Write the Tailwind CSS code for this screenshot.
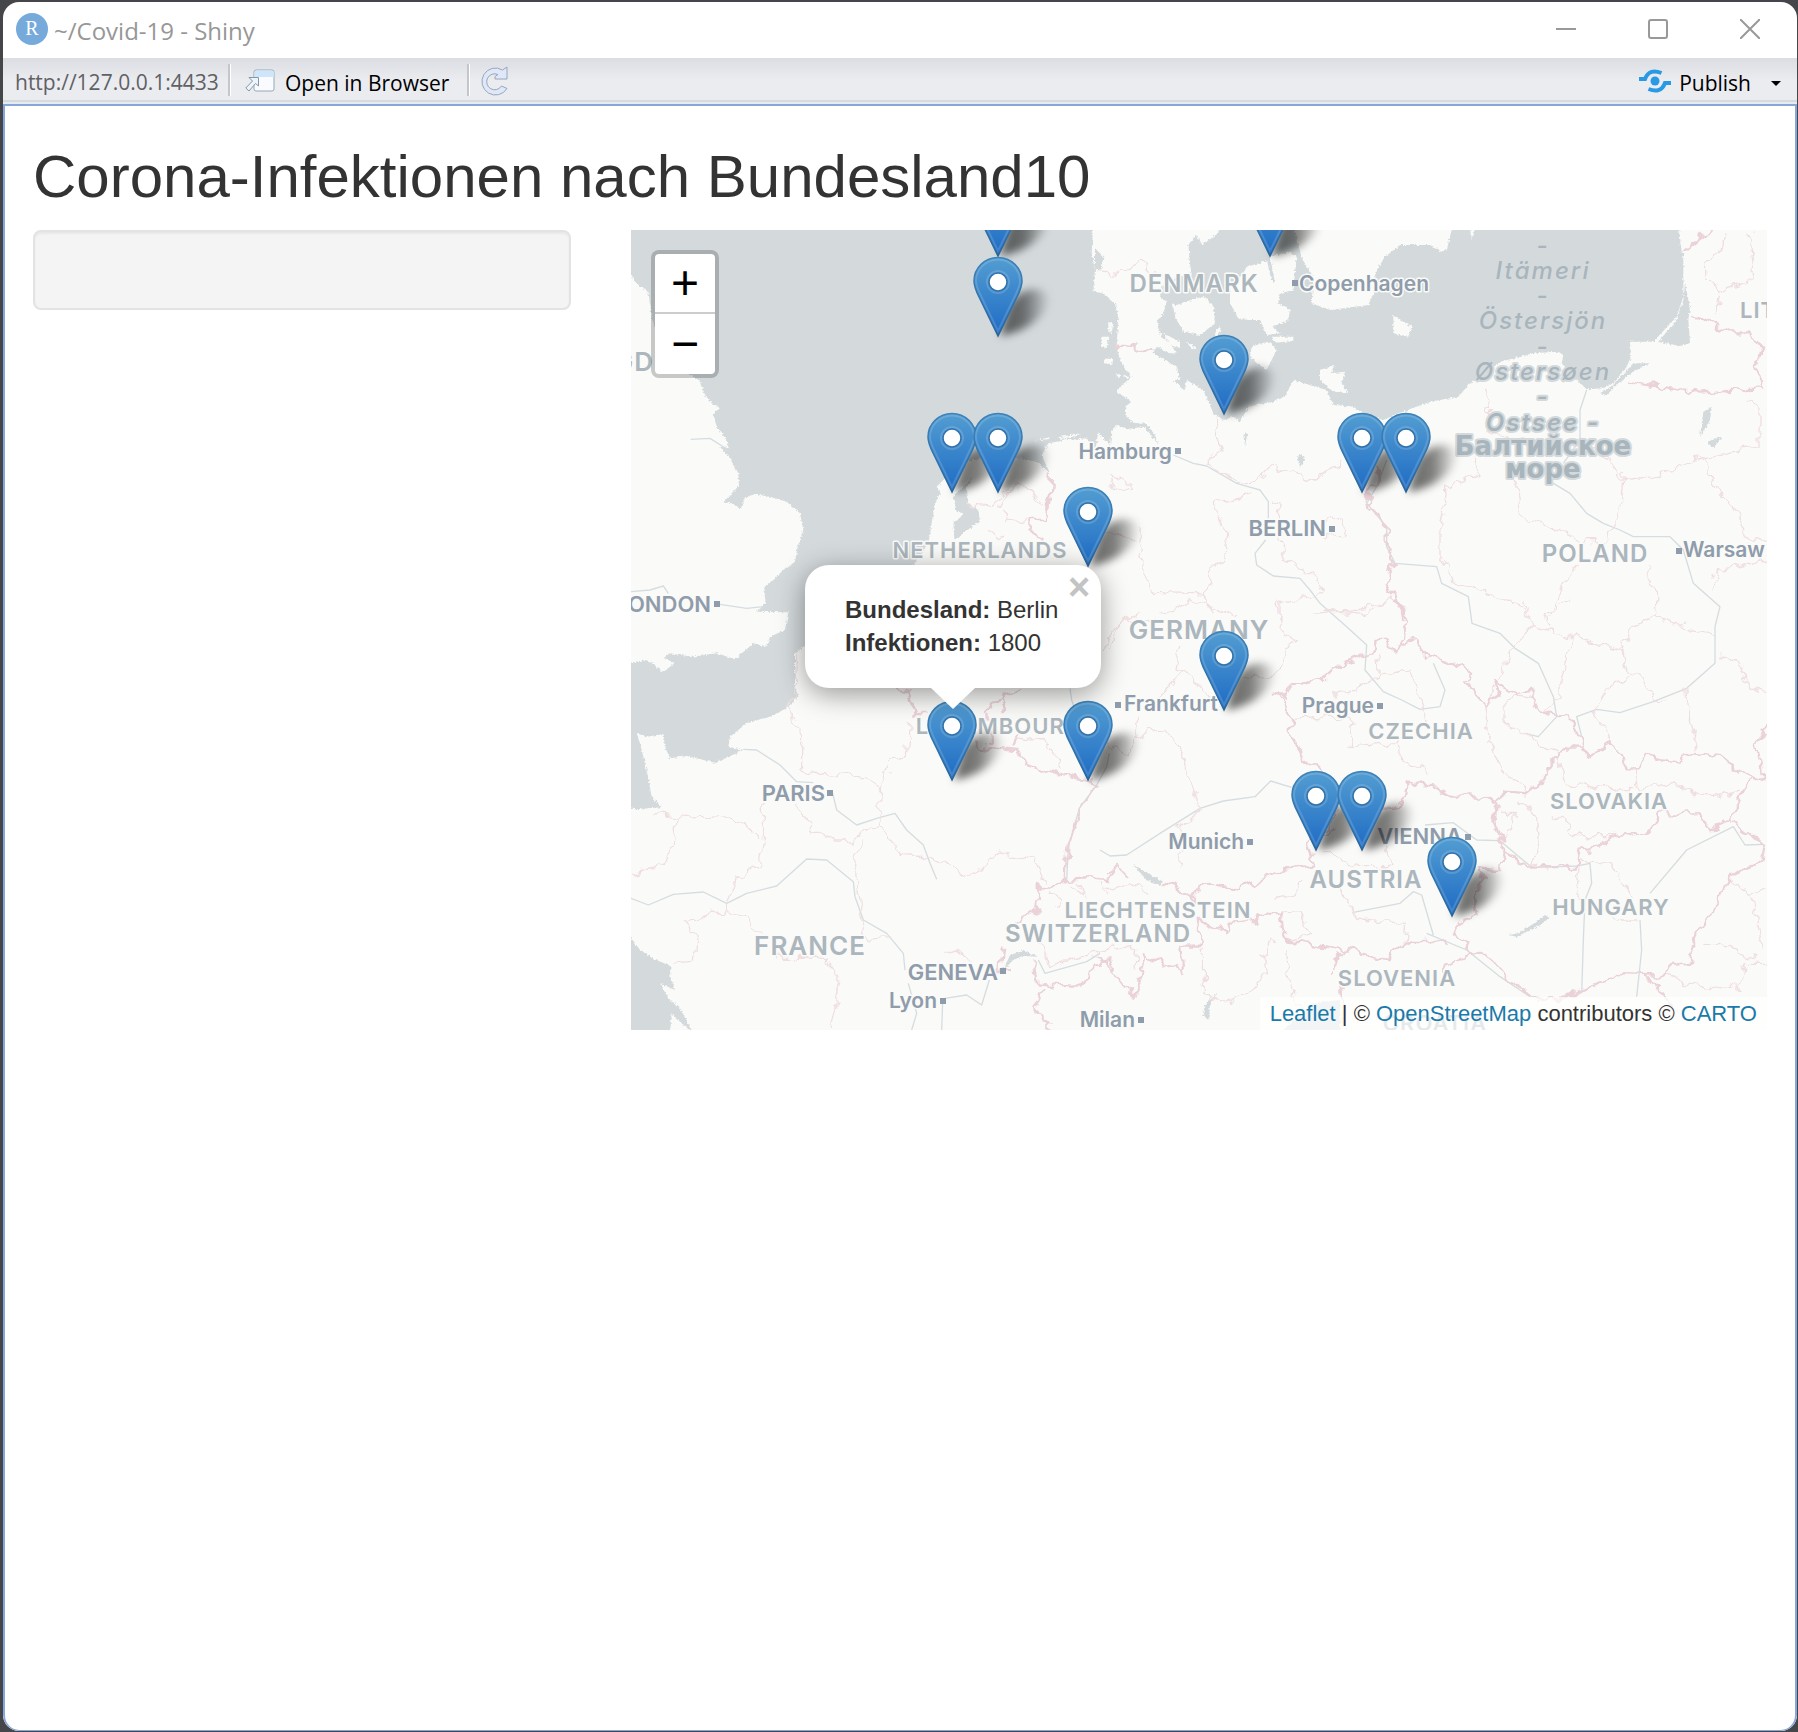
<!DOCTYPE html>
<html lang="de">
<head>
<meta charset="utf-8">
<meta name="viewport" content="width=device-width, initial-scale=1">
<title>~/Covid-19 - Shiny</title>
<script src="https://cdn.jsdelivr.net/npm/@tailwindcss/browser@4"></script>
</head>
<body class="bg-[#44464a]">
<div class="flex min-h-screen flex-col pt-[2px] pr-px pb-px pl-[3px]">
<div class="flex flex-1 flex-col overflow-hidden rounded-2xl bg-white">

  <header class="flex h-14 shrink-0 items-center pr-px pb-0.5 pl-[13px] font-['Open_Sans',sans-serif]">
    <svg class="h-8 w-8" viewBox="0 0 32 32" aria-hidden="true"><circle cx="16" cy="16" r="16" fill="#75aadb"/><text x="16" y="22" text-anchor="middle" font-family="Liberation Serif, serif" font-size="20" fill="#fff">R</text></svg>
    <h1 class="ml-1.5 pt-1 text-[24px] leading-8 whitespace-nowrap text-[#979797]">~/Covid-19 - Shiny</h1>
    <div class="ml-auto flex items-center">
      <button type="button" aria-label="Minimize" class="flex h-14 w-[92px] items-center justify-center"><svg class="h-5 w-5" viewBox="0 0 20 20"><path d="M0 10H20" stroke="#999" stroke-width="2"/></svg></button>
      <button type="button" aria-label="Maximize" class="flex h-14 w-[92px] items-center justify-center"><svg class="h-5 w-5" viewBox="0 0 20 20"><rect x="1" y="1" width="18" height="18" rx="2" fill="none" stroke="#999" stroke-width="2"/></svg></button>
      <button type="button" aria-label="Close" class="flex h-14 w-[92px] items-center justify-center"><svg class="h-5 w-5" viewBox="0 0 20 20"><path d="M0 0L20 20M20 0L0 20" stroke="#999" stroke-width="2"/></svg></button>
    </div>
  </header>

  <nav class="flex h-[46px] shrink-0 items-center border-b-2 border-[#e6ebee] bg-linear-to-b from-[#dbdde2] to-[#ebecf0] to-50% pr-4 pl-3 font-['Open_Sans',sans-serif] text-[21px] leading-8 whitespace-nowrap text-black shadow-[inset_0_-2px_0_#d6dadd]">
    <span class="w-[213px] pt-1 text-[#606164]">http://127.0.0.1:4433</span>
    <span class="h-8 w-[3px] border-l-2 border-[#c4c6ca] border-r border-r-white"></span>
    <button type="button" class="ml-3.5 flex items-center gap-2.5 pt-1.5">
      <svg class="-mt-1 h-6 w-[30px]" viewBox="0 0 30 24" aria-hidden="true"><rect x="9" y="1" width="20" height="21" rx="2" fill="#f9fbfe" stroke="#97a9b8"/><path d="M9.500 8V3.500a2 2 0 0 1 2-2H27a2 2 0 0 1 2 2V8z" fill="#cfe5fa"/><path d="M4 8.500H13.500V17L10.500 14.500L4 22L.8 19L7.500 12z" fill="#eef4fb" stroke="#8398a7"/></svg>
      <span>Open in Browser</span>
    </button>
    <span class="ml-[18px] h-8 w-[3px] border-l-2 border-[#c4c6ca] border-r border-r-white"></span>
    <button type="button" aria-label="Reload" class="ml-2.5 pt-0.5"><svg class="h-[30px] w-7" viewBox="0 0 28 30"><path d="M27 1V13H15V10.500L18 8.500A8 8 0 1 0 21.500 20L27 22.500A13.500 13.500 0 1 1 22.500 4z" fill="#dfe8f8" stroke="#98a6ba"/></svg></button>
    <button type="button" class="ml-auto flex items-center gap-2 pt-1.5">
      <svg class="-mt-1 h-6 w-8" viewBox="0 0 32 24" aria-hidden="true"><circle cx="16" cy="12" r="4.500" fill="#2899e5"/><path d="M0 10H6C9 2 15 1 22.500 4" fill="none" stroke="#2899e5" stroke-width="4"/><path d="M32 14H26C23 22 17 23 9.500 20" fill="none" stroke="#2899e5" stroke-width="4"/></svg>
      <span>Publish</span>
      <svg class="ml-3 h-[5px] w-2.5" viewBox="0 0 10 5" aria-hidden="true"><path d="M0 0H10L5 5z"/></svg>
    </button>
  </nav>

  <main class="flex-1 rounded-b-2xl border-2 border-b border-[#86a7d9] px-7 pt-[38px] font-['Liberation_Sans',sans-serif] text-[#333]">
    <h2 class="mb-5 text-[60px] leading-[66px]">Corona-Infektionen nach Bundesland10</h2>
    <div class="grid grid-cols-3 items-start gap-[60px]">
      <form class="h-20 rounded-lg border-2 border-[#e3e3e3] bg-[#f4f4f4] shadow-[inset_0_2px_2px_#0000000d]"></form>

      <section aria-label="Karte" class="relative col-span-2 h-[800px] overflow-hidden bg-[#fafaf8]">
        <div class="absolute top-0 left-1/2 -ml-[568px] h-[800px] w-[1136px]">
          <svg class="absolute inset-0 h-full w-full" viewBox="33 30 3408 2400" aria-hidden="true">
            <defs>
              <filter id="coast" x="0" y="0" width="100%" height="100%"><feTurbulence type="fractalNoise" baseFrequency=".14" numOctaves="2" seed="4"/><feDisplacementMap in="SourceGraphic" scale="12" xChannelSelector="R" yChannelSelector="G"/></filter>
              <filter id="wiggle" x="0" y="0" width="100%" height="100%"><feTurbulence type="fractalNoise" baseFrequency=".028" numOctaves="2" seed="9"/><feDisplacementMap in="SourceGraphic" scale="44" xChannelSelector="R" yChannelSelector="G"/></filter>
            </defs>
            <!-- seas and lakes -->
            <g filter="url(#coast)" fill="#d4dadc">
              <rect x="0" y="0" width="3500" height="2500" fill="#fafaf8"/>
              <path d="M20 10V150L60 200L85 215L95 290L110 340L130 430L205 462L238 482L255 525L275 550L298 562L280 585L290 620L315 655L330 685L300 680L330 715L355 760L357 797L335 820L312 845L335 850L362 868L375 832L405 823L450 830L500 845L540 880L550 930L533 980L525 1025L490 1050L455 1085L430 1105L438 1150L410 1175L505 1177L495 1230L450 1250L440 1280L400 1270L345 1318L290 1300L215 1310L150 1300L110 1330L75 1320L20 1330V1765L50 1768L125 1762L95 1730L80 1650L60 1570L50 1540L80 1550L130 1542L135 1580L150 1615L200 1608L285 1628L370 1590L325 1580L330 1550L380 1510L450 1490L500 1465L535 1430L525 1400V1300L550 1280L620 1255L750 1120L880 1035L925 970L945 850L960 820L950 800L975 775L1000 740L1060 720L1100 715L1200 715L1250 725L1290 760L1265 705L1285 670L1340 660L1400 655L1425 690L1435 640L1470 675L1475 635L1490 615L1520 628L1570 620L1590 640L1615 675L1605 645L1580 612L1540 608L1520 590L1515 560L1535 545L1490 515L1500 500L1535 470L1510 440L1495 405L1490 380L1495 290L1485 250L1450 220L1420 215L1425 150L1415 100L1420 10z"/>
              <path d="M1425 85L1450 110L1445 145L1425 150zM1000 835L1010 875L1030 880L1015 900L1000 905L1003 960L1050 925L1080 905L1075 870L1045 850L1040 800L1060 770L1005 825z"/>
              <path d="M20 2135L60 2190L100 2215L155 2240L150 2265L165 2310L120 2290L145 2335L180 2365L220 2440L180 2405L155 2380L150 2440H20z"/>
              <g transform="translate(1140)">
                <path d="M655 10V40L605 75L590 45L565 75L570 130L575 165L540 170L490 190L480 230L500 245L485 290L470 300L485 350L510 370L530 400L510 400L470 380L460 400L530 440L540 480L520 480L555 510L560 480L610 510L640 580L670 600L700 590L720 605L745 560L820 545L855 530L880 480L930 495L980 510L1000 555L1060 560L1100 585L1150 600L1200 578L1290 545L1375 530L1410 490L1460 460L1500 425L1600 400L1675 395L1690 405L1685 430L1730 480L1760 508L1810 505L1840 490L1880 440L1893 410L1890 365L1960 365L2030 290L2050 230V100L2045 95L2035 10H1425L1415 60L1408 10H1360L1340 90L1325 95L1290 75L1200 75L1155 110L1125 160L1130 200L1105 255L990 270L935 250L940 170L905 115L880 10z"/>
                <path d="M1800 520L1840 495L1900 430H1950L1900 455L1860 485L1820 525zM2055 190L2070 260L2065 300L2070 370L2040 378L1975 365L2030 300L2050 240z"/>
                <path d="M730 645L742 640L735 680zM890 710L905 702L915 720L900 740z"/>
                <g fill="#fafaf8"><path d="M690 200L720 180L740 140L780 130L800 120L815 180L825 190L810 110L870 95L890 110L885 160L880 210L840 220L835 250L870 270L865 300L820 320L840 340L800 345L780 300L745 300L715 295L690 250z"/><path d="M515 250L530 255L590 235L615 230L640 260L645 310L600 345L550 335L530 300zM755 380L800 365L815 370L830 390L800 450L780 435L750 410zM960 450L1005 435L990 460L1035 455L1025 490L1045 520L1000 515L960 480zM1180 285L1235 320L1225 350L1180 340zM815 350L880 350V362L830 368zM490 340L540 365V385L510 375zM655 320L662 325L645 380L635 370zM560 365L590 385L575 388zM325 305L340 310L335 340L325 335zM305 350L325 350L320 385L303 380zM315 415L340 418L335 432L312 430zM345 465L360 462L358 475zM370 465L388 468L380 478z"/><path d="M100 662L150 652L148 657zM175 652L240 640L245 645L180 657z"/></g>
              </g>
              <g transform="translate(0 1140)"><path d="M1155 1100L1170 1065L1210 1052L1255 1070L1210 1068L1180 1080L1155 1105z"/><path d="M95 190L130 172L163 190L130 215z" fill="#fafaf8"/></g>
              <g transform="translate(1440 1140)"><path d="M100 795L190 845L180 858L140 840zM350 1180L330 1215L325 1260L308 1245L315 1215zM640 1210L720 1200V1300H540z"/></g>
              <g transform="translate(2430 1140)"><path d="M235 1005L265 1000L320 965L345 945L358 955L330 975L260 1010z"/></g>
              <path d="M3250 575L3275 560L3270 600L3240 650zM3260 665L3305 650L3280 685z"/>
            </g>
            <!-- rivers -->
            <g fill="none" stroke="#d5dde1" stroke-width="4" stroke-linejoin="round">
              <path d="M33 1115L90 1110L130 1098L145 1120M212 658L270 655L325 690M300 1153L380 1165L430 1160"/>
              <path d="M1660 705L1720 730L1760 738L1850 790L1920 810L1945 845V895M1937 960L1905 1000L1910 1035L1960 1068L2040 1075L2070 1110L2100 1150L2180 1220L2240 1275L2235 1350L2290 1415L2345 1440L2400 1468L2460 1460L2475 1410L2440 1330"/>
              <path d="M2300 720L2270 800L2240 850L2300 920V980L2325 1030L2450 1040L2465 1090L2545 1130L2556 1210L2640 1240L2685 1285L2755 1330L2800 1430L2810 1490L2755 1550L2715 1540"/>
              <path d="M2900 510L2880 570V660L2830 730M2800 790L2850 820L2900 880L2950 910L3000 930L3040 950L3150 950L3190 990L3220 1090L3300 1160L3285 1220V1330L3200 1405L3100 1445L3000 1478L2930 1468L2870 1490L2885 1550"/>
              <g transform="translate(0 1140)"><path d="M370 448L410 450L480 495L530 545L580 548M638 580L650 630L710 675L770 655L825 640L860 690L910 735L930 790L950 838M33 895L85 915L160 883L250 876L320 910L380 880L470 858L560 777L620 780L700 845L705 890L730 960L800 1000L850 1060L855 1110M865 1150L890 1240L875 1290M968 1205L965 1290M975 1195L1040 1185L1085 1215L1108 1140M1255 1080L1275 1120L1400 1085L1440 1060M1350 265L1355 300L1365 330M1468 460L1460 500L1430 555L1378 625L1345 740L1340 840"/></g>
              <g transform="translate(1440 1140)"><path d="M0 750L30 768L80 765L180 700L300 625L370 603L465 590L512 543L575 562M760 937L900 910L940 875L965 885L1000 1005M975 675L1060 668L1130 720L1200 722L1295 802L1430 798L1470 790L1475 850L1455 900L1450 1020L1445 1180M1650 880L1760 750L1900 680L1935 735L1990 733M1620 960L1625 1050L1610 1190M980 1000L1100 1050L1200 1130L1290 1190"/></g>
            </g>
            <!-- regional boundaries -->
            <g filter="url(#wiggle)">
            <rect x="0" y="0" width="3500" height="2500" fill="none"/>
            <g fill="none" stroke="#f0dfe1" stroke-width="4" stroke-linejoin="round">
              <path d="M1430 155L1500 160L1570 125L1630 180M1140 865L1180 790L1220 800L1270 850M1045 850L1120 860L1180 790M1150 870L1170 905L1220 900M1100 930L1150 960M1470 770L1530 785L1530 815L1480 800zM1800 600L1785 650L1800 690L1760 730L1850 790L1900 790L1950 740L2080 780L2170 725M1900 815L1780 855L1820 940L1810 1020L1760 1050V1120L1780 1180M1950 840L1980 850L1975 950L2000 1020L2100 1080L2110 1115M2080 920L2160 890L2180 950L2120 950M1550 930L1570 1050L1600 1120L1770 1125M1980 1200L1980 1150L2110 1120M2080 1180L2200 1170L2290 1150M1420 950L1450 940L1540 960M2600 500L2610 640L2740 680L2830 670L2930 690L2970 720L3000 780L3100 770L3260 710L3420 680L3420 560L3380 540M2750 650L2700 660M2560 710L2580 770L2480 800L2480 850L2460 900V1020L2500 1080L2640 1130L2700 1160L2730 1200M2680 760L2700 890L2850 940L2880 965L2960 965L3000 860L3010 760M3260 710L3280 800L3350 870L3390 960H3440M2870 1030L2820 1110L2790 1190M3080 1040L3110 1120L3110 1190M3440 1020L3300 1050L3270 1110M3310 40L3300 90L3260 120L3260 180L3300 210L3290 280M3300 210L3390 190L3400 150L3390 40"/>
              <g transform="translate(0 1140)"><path d="M530 160L525 290L505 320L545 400V510L700 530L740 530L780 580L780 670L700 720L650 720L580 690L530 610M865 365L860 465L810 480L780 580M430 610L430 720L420 790L340 840L315 930L190 960L225 1010L220 1090L160 1095M100 640L190 655L300 650L345 660L420 710M165 650L160 740L130 795L33 820M315 930L380 960L425 1000M780 675L840 760L930 765L1040 835L1140 755L1240 780L1280 850M725 725L700 800L730 950L725 1000L740 1015L800 1010M470 1075L620 1075L660 1140L640 1240L630 1290M970 1060L1020 1050L1060 1090M1180 410L1270 420L1310 460L1320 510M1450 150L1480 80L1560 40M1290 880L1330 900L1310 930M1340 860L1400 890L1380 850M1450 850L1460 890M1250 1000L1290 1100L1340 1080L1480 1040"/></g>
              <g transform="translate(1440 1140)"><path d="M30 150L60 70L170 55M180 50L280 0L420 50M530 0L540 90L590 130L550 150L540 220L430 230M240 130L225 200L250 215L170 290M250 215L330 280L350 310M105 340L115 420L145 395L190 385L250 460L260 540L295 590L290 640L235 680L250 740L240 800M20 430L80 460L115 420M670 30L790 40L880 0M830 160L840 230L930 210L965 310L980 370M840 230L700 290M585 355L650 350L760 355L750 440L900 430L905 480L990 520M670 760L780 800L880 800L850 740M720 870L765 935L780 960L920 970L915 1030M600 840L590 880L520 900M530 940L600 935L635 1000L570 1020M515 1020L490 1070L500 1120L440 1180L370 1215L310 1180L310 1040M560 1060L570 1150L630 1290M720 1170L740 1290M20 870L90 850L150 880M40 1050L110 1040L105 1100"/></g>
              <g transform="translate(2430 1140)"><path d="M275 0L305 80L250 140L205 240L165 320L175 420L220 510L290 575M305 80L430 110L580 150L610 80L670 50L860 110M360 80L350 40L420 0M430 110L390 240L390 300L345 330M580 150L595 220L640 240L670 295L700 295M595 230L530 270L490 340L535 400L540 420M860 165L920 180L960 260L1010 275M770 265L780 370L800 450M380 460L410 550L500 570L610 565M610 510L620 570L700 550L840 590L930 570M225 370L225 300L260 285L310 300M225 370L330 430L390 465M210 640L250 640L240 700L215 720M270 600L320 660L330 740L310 800M370 640L410 660L430 710L550 710M450 780L540 790L610 890M450 800L440 880L470 900M500 930L580 960L620 960M900 840L960 880L1010 870M960 880L990 1000L1000 1045M820 1030L870 1030L930 1060L980 1080M710 1125L780 1150L930 1165L950 1090L1010 1090"/></g>
            </g>
            <!-- national borders -->
            <g fill="none" stroke="#ead2d8" stroke-width="7" stroke-linejoin="round">
              <path d="M1490 380L1550 385L1580 400L1600 390M1293 760L1290 820L1275 900L1225 900L1225 940L1270 955M3010 485L3230 515L3425 505L3410 440L3430 390L3390 340L3330 340L3230 290L3210 295M3190 95L3230 60L3280 30M2275 740L2280 780L2240 830L2250 870L2300 920L2300 980L2325 1030L2300 1080L2330 1150L2350 1190"/>
              <g transform="translate(0 1140)"><path d="M810 265L870 280L890 345L920 345M1100 345L1120 300L1145 295L1155 340M1200 265L1145 295M1060 430L1100 440L1195 450L1215 495L1300 520L1430 550L1380 620L1345 740L1340 835L1290 870L1250 860L1260 890L1250 930L1190 965M1340 840L1400 835L1470 840L1490 795M1150 1040L1140 1110L1170 1110M1240 1080L1250 1150L1340 1160L1385 1160L1440 1080L1470 1075L1490 1120M1265 1170L1240 1230L1285 1270L1285 1290M1190 400L1180 440M1105 345L1110 430"/></g>
              <g transform="translate(1440 1140)"><path d="M880 0L920 50L910 130L890 160L860 120L820 120L820 150L700 200L660 240L580 250L550 295L525 275L580 360L565 390L610 470L670 520L700 560L710 640L680 690M910 130L940 120L980 165L1050 190L1120 210L1090 240L1150 310L1200 290L1180 245L1250 280L1300 270L1290 310L1340 340L1410 350L1450 440M700 690L620 720L640 800L540 810L400 875L350 850L300 845L280 900L230 860L190 845M20 820L60 800L90 830M-10 1070L20 1080L50 1130L100 1190L140 1060L180 1090L250 1110L240 1040L300 1040L290 960L380 1000L390 965L460 960L535 940L560 1020L740 1050L860 1080L930 1020L1040 1020M740 1050L700 1080L700 1110M720 620L870 630L915 600L920 545L1000 560L1050 590L1150 590L1190 610L1180 660L1210 740L1200 810L1140 805L1155 850L1120 870L1130 950L1090 960L1060 1000L1120 1050L1090 1080L1030 1110M720 1160L730 1210M1120 1045L1200 1100L1240 1160L1320 1200L1400 1195L1440 1165"/></g>
              <g transform="translate(2430 1140)"><path d="M190 610L230 575L290 580L350 530L360 490L410 440L460 440L470 465L540 425L580 465L590 505L620 505L650 465L740 485L800 455L860 465L920 515L1000 540L980 430L1010 375M960 530L930 600L905 660L850 685L800 640L690 640L655 695L550 710L510 740L450 745L440 800L300 803L215 750M960 700L1005 740L990 790L900 830L840 950L790 1030L780 1090L720 1100L700 1130L560 1125L490 1155L420 1185M650 1130L700 1185L730 1240M905 665L960 710"/></g>
            </g>
            </g>
          </svg>

          <svg class="absolute inset-0 h-full w-full font-['Inter',sans-serif]" viewBox="0 0 1136 800">
            <defs>
              <linearGradient id="pinFill" x2="0" y2="1"><stop stop-color="#539dd2"/><stop offset="1" stop-color="#1e6bc4"/></linearGradient>
              <linearGradient id="pinEdge" x2="0" y2="1"><stop stop-color="#3b83bb"/><stop offset="1" stop-color="#2b6699"/></linearGradient>
              <linearGradient id="pinShade" x1="0" y1="0" x2="1" y2="0"><stop stop-opacity=".6"/><stop offset=".5" stop-opacity=".5"/><stop offset="1" stop-opacity=".05"/></linearGradient>
              <filter id="soft" x="-30%" y="-30%" width="160%" height="160%"><feGaussianBlur stdDeviation="4"/></filter>
              <g id="pin">
                <path d="M2 -1L10 -30C22 -54 54 -52 50 -34C46 -18 24 -4 2 -1z" fill="url(#pinShade)" filter="url(#soft)"/>
                <path d="M0 -1L-19 -40C-22 -46 -24 -51 -24 -56A24 23.500 0 0 1 24 -56C24 -51 22 -46 19 -40z" fill="url(#pinFill)" stroke="url(#pinEdge)" stroke-width="1.500"/>
                <path d="M0 -6L-17 -41C-20 -47 -22 -51 -22 -56A22 21.500 0 0 1 22 -56C22 -51 20 -47 17 -41z" fill="none" stroke="#fff" stroke-opacity=".15" stroke-width="2"/>
                <circle cy="-55" r="11" fill="none" stroke="#fff" stroke-opacity=".15" stroke-width="2"/>
                <circle cy="-55" r="9" fill="#fff" stroke="#3473a9" stroke-width="1.500"/>
              </g>
            </defs>
            <!-- country names -->
            <g class="text-[22px] font-semibold tracking-[1px]" fill="#abb6bd" stroke="#fafaf8" stroke-width="3" paint-order="stroke" stroke-linejoin="round" text-anchor="middle">
              <text x="349" y="328">NETHERLANDS</text>
              <text x="790" y="509">CZECHIA</text>
              <text x="1109" y="88" text-anchor="start">LITHUANIA</text>
              <text x="368" y="504">LUXEMBOURG</text>
              <text x="527" y="688">LIECHTENSTEIN</text>
              <text x="766" y="756">SLOVENIA</text>
              <text x="978" y="579">SLOVAKIA</text>
              <text x="980" y="685">HUNGARY</text>
              <text x="804" y="801">CROATIA</text>
              <g class="text-[24px]">
                <text x="563" y="62">DENMARK</text>
                <text x="964" y="332">POLAND</text>
                <text x="467" y="712">SWITZERLAND</text>
                <text x="735" y="658">AUSTRIA</text>
              </g>
              <g class="text-[26px]">
                <text x="568" y="409">GERMANY</text>
                <text x="179" y="725">FRANCE</text>
                <text x="69" y="141" text-anchor="end">KINGDOM</text>
              </g>
            </g>
            <!-- city names -->
            <g class="text-[21px] font-semibold" fill="#8f9cab" stroke="#fafaf8" stroke-width="3" paint-order="stroke" stroke-linejoin="round" text-anchor="end">
              <text x="798" y="61">Copenhagen</text>
              <text x="541" y="229">Hamburg</text>
              <text x="587" y="481">Frankfurt</text>
              <text x="743" y="483">Prague</text>
              <text x="1134" y="327">Warsaw</text>
              <text x="306" y="778">Lyon</text>
              <text x="504" y="797">Milan</text>
              <text x="613" y="619">Munich</text>
              <g class="text-[22px]">
                <text x="695" y="306">BERLIN</text>
                <text x="80" y="382">LONDON</text>
                <text x="194" y="571">PARIS</text>
                <text x="367" y="750">GENEVA</text>
                <text x="831" y="614">VIENNA</text>
              </g>
            </g>
            <path d="M661 50h6v6h-6zM544 218h6v6h-6zM698 296h6v6h-6zM83 371h6v6h-6zM484 472h6v6h-6zM746 473h6v6h-6zM1045 318h6v6h-6zM196 560h6v6h-6zM369 738h6v6h-6zM309 768h6v6h-6zM507 787h6v6h-6zM616 609h6v6h-6zM834 604h6v6h-6z" fill="#8f9cab"/>
            <!-- Baltic Sea in the languages around it -->
            <g class="text-[24px] font-medium tracking-[2px] italic" fill="#a9b5bc" stroke="#d4dadc" stroke-width="4" paint-order="stroke" stroke-linejoin="round" text-anchor="middle">
              <text x="912" y="24">-</text><text x="912" y="49">Itämeri</text>
              <text x="912" y="74">-</text><text x="912" y="99">Östersjön</text>
              <text x="912" y="125">-</text><text x="912" y="150">Østersøen</text>
              <text x="912" y="175">-</text><text x="912" y="201" class="font-semibold">Ostsee -</text>
              <g class="font-['DejaVu_Sans',sans-serif] text-[26px] font-bold tracking-normal not-italic"><text x="912" y="225">Балтийское</text><text x="912" y="248">море</text></g>
            </g>
            <!-- markers, placed by their tips -->
            <use href="#pin" x="367" y="27"/><use href="#pin" x="639" y="27"/>
            <use href="#pin" x="367" y="107"/><use href="#pin" x="593" y="185"/>
            <use href="#pin" x="321" y="263"/><use href="#pin" x="367" y="263"/>
            <use href="#pin" x="731" y="263"/><use href="#pin" x="775" y="263"/>
            <use href="#pin" x="457" y="337"/><use href="#pin" x="593" y="481"/>
            <use href="#pin" x="321" y="551"/><use href="#pin" x="457" y="551"/>
            <use href="#pin" x="685" y="621"/><use href="#pin" x="731" y="621"/>
            <use href="#pin" x="821" y="687"/>
          </svg>

          <div class="absolute top-[335px] left-[174px] w-[296px]">
            <div class="relative rounded-3xl bg-white px-10 pt-7 pb-[29px] text-[24px] leading-[33px] whitespace-nowrap shadow-[0_6px_28px_#00000066]">
              <p><b>Bundesland:</b> Berlin</p>
              <p><b>Infektionen:</b> 1800</p>
              <button type="button" aria-label="Popup schließen" class="absolute top-1 right-2 h-9 w-7 text-[38px] leading-9 font-bold text-[#c3c3c3]">×</button>
            </div>
            <svg class="absolute top-full left-[126px] h-[22px] w-[44px]" viewBox="0 0 44 22" aria-hidden="true"><path d="M0 0H44L22 21z" fill="#fff"/></svg>
          </div>
        </div>

        <div class="absolute top-5 left-5 flex w-[68px] flex-col divide-y-2 divide-[#ccc] overflow-hidden rounded-lg border-4 border-black/20 bg-white bg-clip-padding text-[48px] text-black">
          <button type="button" aria-label="Zoom in" class="h-[60px] leading-[58px]">+</button>
          <button type="button" aria-label="Zoom out" class="h-[60px] leading-[58px]">−</button>
        </div>

        <p class="absolute right-0 bottom-0 bg-white/70 px-2.5 text-[22px] leading-[33px] whitespace-nowrap"><a href="#" class="text-[#1a7aa9]">Leaflet</a> | © <a href="#" class="text-[#1a7aa9]">OpenStreetMap</a> contributors © <a href="#" class="text-[#1a7aa9]">CARTO</a></p>
      </section>
    </div>
  </main>
</div>
</div>
</body>
</html>
